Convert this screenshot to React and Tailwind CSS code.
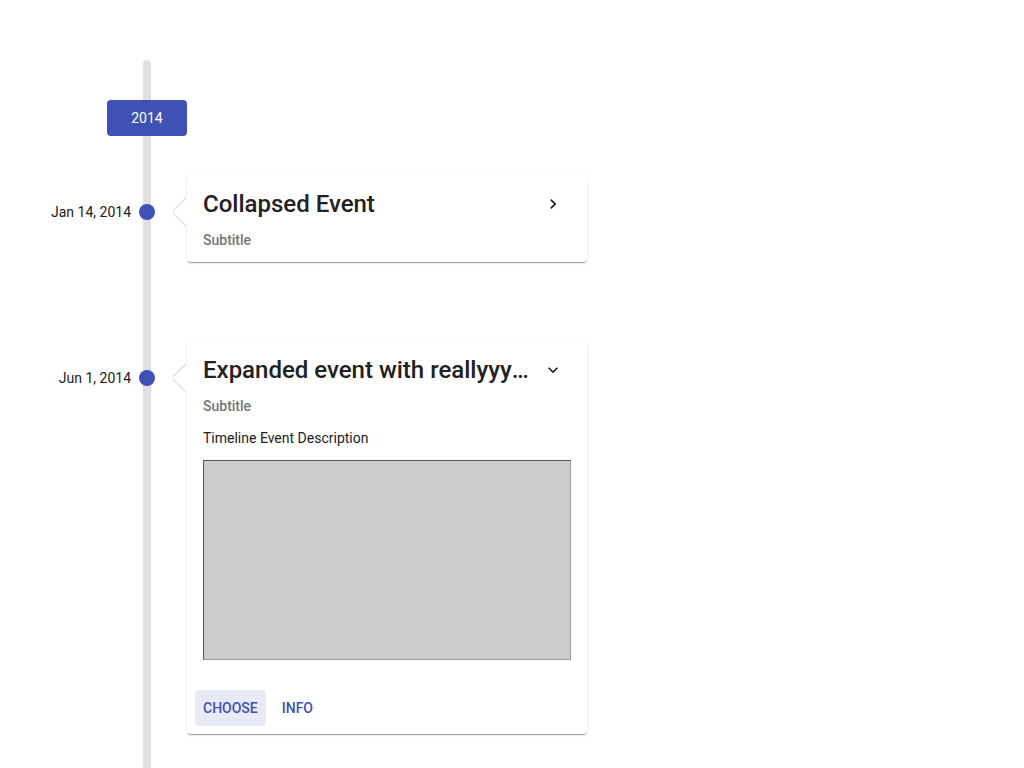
import React from 'react';

function ChevronRight() {
  return (
    <svg width="20" height="20" viewBox="0 0 24 24" fill="#212121">
      <path d="M8.59 16.59L13.17 12 8.59 7.41 10 6l6 6-6 6-1.41-1.41z" />
    </svg>
  );
}

function ChevronDown() {
  return (
    <svg width="20" height="20" viewBox="0 0 24 24" fill="#212121">
      <path d="M7.41 8.59L12 13.17l4.59-4.58L18 10l-6 6-6-6 1.41-1.41z" />
    </svg>
  );
}

function Pointer() {
  return (
    <div className="absolute left-[-14px] top-[22px] w-[14px] h-[28px] overflow-hidden">
      <div className="absolute left-[4px] top-[4px] w-[20px] h-[20px] bg-white rotate-45 shadow-[-1px_1px_2px_rgba(0,0,0,0.16)]" />
    </div>
  );
}

function EventRow({ date, title, expanded, children, className = '' }) {
  return (
    <div className={`flex items-start ${className}`}>
      <div className="w-[131px] mt-[26px] text-right text-sm leading-5 text-[#212121]">{date}</div>
      <div className="w-[32px] flex justify-center">
        <div className="mt-[28px] w-4 h-4 rounded-full bg-[#3f51b5]" />
      </div>
      <div className="ml-6 w-[400px] relative bg-white rounded-sm shadow-[0_2px_1px_-1px_rgba(0,0,0,0.2),0_1px_1px_0_rgba(0,0,0,0.14),0_1px_3px_0_rgba(0,0,0,0.12)]">
        <Pointer />
        <div className={`px-4 pt-3 ${expanded ? 'pb-[22px]' : 'pb-3'}`}>
          <div className="flex items-center">
            <h2 className="flex-1 min-w-0 truncate text-2xl leading-8 font-medium text-[#212121]">{title}</h2>
            <div className="ml-3 mr-2 w-5 h-5 shrink-0">
              {expanded ? <ChevronDown /> : <ChevronRight />}
            </div>
          </div>
          <div className="mt-2.5 text-sm leading-5 font-medium text-[#757575]">Subtitle</div>
          {children}
        </div>
        {expanded && (
          <div className="flex gap-2 p-2">
            <button className="h-9 px-2 rounded-sm bg-[#e8eaf6] text-sm font-medium uppercase text-[#3f51b5]">
              Choose
            </button>
            <button className="h-9 px-2 rounded-sm text-sm font-medium uppercase text-[#3f51b5]">
              Info
            </button>
          </div>
        )}
      </div>
    </div>
  );
}

export default function App() {
  return (
    <div className="relative min-h-[800px] bg-white pt-[100px] pb-16 font-['Roboto',sans-serif]">
      <div className="absolute left-[143px] top-[60px] bottom-0 w-2 rounded-t-full bg-[#e0e0e0]" />
      <div className="relative">
        <div className="ml-[107px] w-20 h-9 flex items-center justify-center rounded-sm bg-[#3f51b5] text-sm text-white">
          2014
        </div>
        <EventRow className="mt-10" date="Jan 14, 2014" title="Collapsed Event" />
        <EventRow className="mt-20" date="Jun 1, 2014" title="Expanded event with reallyyyyyyyyyyy long title" expanded>
          <p className="mt-3 text-sm leading-5 text-[#212121]">Timeline Event Description</p>
          <div className="mt-3 h-[200px] bg-[#cccccc] border-t border-l border-[#555555] border-r-[#9e9e9e] border-b-[#9e9e9e] border-r border-b" />
        </EventRow>
      </div>
    </div>
  );
}
